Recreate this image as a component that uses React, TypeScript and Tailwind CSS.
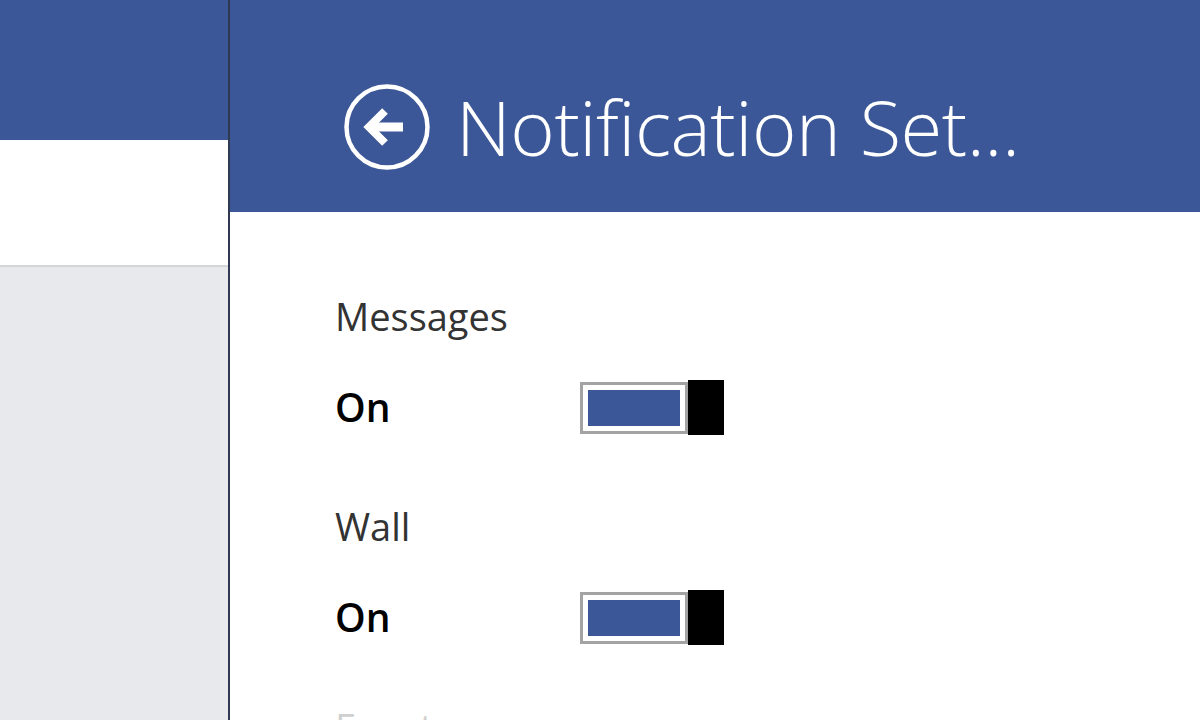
import { ReactNode } from 'react'

function BackButton() {
  return (
    <svg width="90" height="90" viewBox="0 0 90 90" className="shrink-0">
      <circle cx="45" cy="45" r="40.5" fill="none" stroke="white" strokeWidth="4.5" />
      <path d="M30 45 H61" stroke="white" strokeWidth="9" strokeLinecap="butt" />
      <path d="M43 29 L27 45 L43 61" fill="none" stroke="white" strokeWidth="8" strokeLinejoin="miter" />
    </svg>
  )
}

function Toggle({ on }: { on: boolean }) {
  return (
    <div className="flex h-[55px] w-[144px] items-center">
      <div className="flex h-[52px] w-[108px] items-center border-[3px] border-[#a3a3a3] p-[5px]">
        <div className={on ? 'h-full w-full bg-[#3b5798]' : 'h-full w-full bg-white'} />
      </div>
      <div className="h-[55px] w-[36px] bg-black" />
    </div>
  )
}

function SettingRow({ label, children }: { label: string; children: ReactNode }) {
  return (
    <div className="flex flex-col">
      <div className="h-[64px] text-[38px] leading-[64px] font-normal text-[#333]">{label}</div>
      <div className="mt-[32px] flex h-[55px] items-center">
        <div className="w-[245px] text-[39px] font-semibold text-black">{children}</div>
        <Toggle on />
      </div>
    </div>
  )
}

export default function App() {
  return (
    <div className="flex h-[720px] w-[1200px] overflow-hidden bg-white" style={{ fontFamily: '"Open Sans", "Noto Sans", sans-serif' }}>
      {/* left list pane */}
      <div className="flex w-[228px] shrink-0 flex-col">
        <div className="h-[140px] shrink-0 bg-[#3b5798]" />
        <div className="h-[127px] shrink-0 border-b-2 border-[#d5d6d8] bg-white" />
        <div className="flex-1 bg-[#e8e9ec]" />
      </div>
      <div className="w-[2px] shrink-0 bg-[#2f3a52]" />

      {/* settings flyout */}
      <div className="flex flex-1 flex-col">
        <div className="flex h-[212px] shrink-0 items-center gap-[24px] bg-[#3b5798] pl-[112px] pt-[42px]">
          <BackButton />
          <h1 className="text-[76px] leading-none font-light tracking-[-0.5px] text-white">Notification Set...</h1>
        </div>
        <div className="flex flex-col pl-[105px] pt-[72px]">
          <SettingRow label="Messages">On</SettingRow>
          <div className="mt-[59px]">
            <SettingRow label="Wall">On</SettingRow>
          </div>
          <div className="mt-[50px] h-[64px] text-[38px] leading-[64px] text-[#cfcfcf]">Events</div>
        </div>
      </div>
    </div>
  )
}
